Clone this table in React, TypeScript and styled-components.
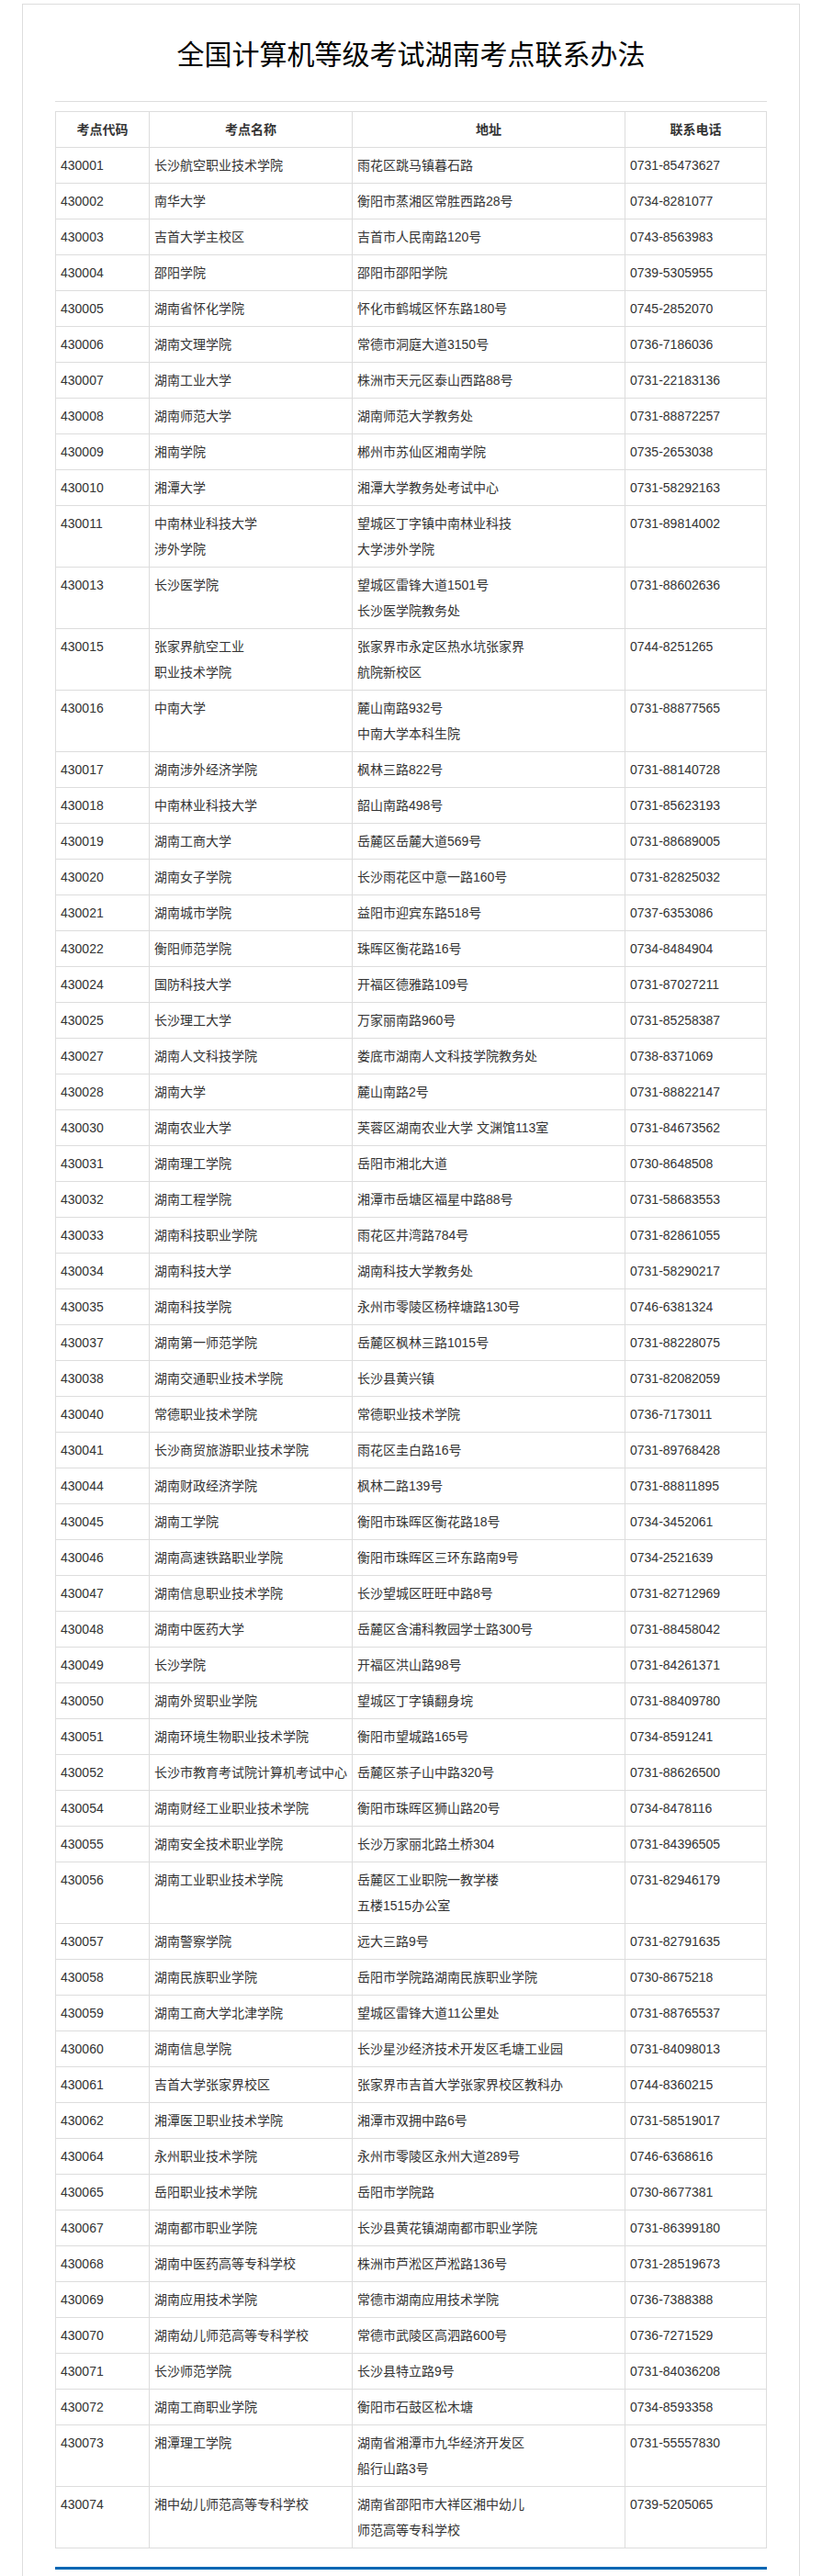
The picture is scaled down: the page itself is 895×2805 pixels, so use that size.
import React from 'react'
import styled, { createGlobalStyle } from 'styled-components'

const GlobalStyle = createGlobalStyle`
  body {
    margin: 0;
    background: #fff;
    font-family: "Liberation Sans", Arial, "Noto Sans CJK SC", sans-serif;
  }
`

const Page = styled.div`
  width: 775px;
  margin: 4px auto 0;
  border: 1px solid #ddd;
  border-bottom: none;
  padding: 0 35px 30px;
`

const Title = styled.h1`
  margin: 32px 0 0;
  font-size: 30px;
  line-height: 40px;
  font-weight: normal;
  text-align: center;
  color: #000;
  font-family: "Noto Sans CJK SC", sans-serif;
`

const Divider = styled.div`
  margin-top: 33px;
  height: 1px;
  background: #ddd;
`

const Table = styled.table`
  margin-top: 10px;
  width: 775px;
  border-collapse: collapse;
  table-layout: fixed;
  font-size: 14px;
  color: #333;
`

const Cell = styled.td<{ $w?: number }>`
  box-sizing: border-box;
  width: ${p => (p.$w ? `${p.$w}px` : 'auto')};
  border: 1px solid #ddd;
  padding: 5px;
  line-height: 28px;
  vertical-align: top;
  text-align: left;
  white-space: nowrap;
`

const HeadCell = styled(Cell).attrs({ as: 'th' })`
  font-weight: bold;
  text-align: center;
  vertical-align: middle;
`

const BlueBar = styled.div`
  margin-top: 20px;
  height: 3px;
  background: #0066b3;
`

type Row = [string, string, string, string]

const rows: Row[] = [
  ['430001', '长沙航空职业技术学院', '雨花区跳马镇暮石路', '0731-85473627'],
  ['430002', '南华大学', '衡阳市蒸湘区常胜西路28号', '0734-8281077'],
  ['430003', '吉首大学主校区', '吉首市人民南路120号', '0743-8563983'],
  ['430004', '邵阳学院', '邵阳市邵阳学院', '0739-5305955'],
  ['430005', '湖南省怀化学院', '怀化市鹤城区怀东路180号', '0745-2852070'],
  ['430006', '湖南文理学院', '常德市洞庭大道3150号', '0736-7186036'],
  ['430007', '湖南工业大学', '株洲市天元区泰山西路88号', '0731-22183136'],
  ['430008', '湖南师范大学', '湖南师范大学教务处', '0731-88872257'],
  ['430009', '湘南学院', '郴州市苏仙区湘南学院', '0735-2653038'],
  ['430010', '湘潭大学', '湘潭大学教务处考试中心', '0731-58292163'],
  ['430011', '中南林业科技大学|涉外学院', '望城区丁字镇中南林业科技|大学涉外学院', '0731-89814002'],
  ['430013', '长沙医学院', '望城区雷锋大道1501号|长沙医学院教务处', '0731-88602636'],
  ['430015', '张家界航空工业|职业技术学院', '张家界市永定区热水坑张家界|航院新校区', '0744-8251265'],
  ['430016', '中南大学', '麓山南路932号|中南大学本科生院', '0731-88877565'],
  ['430017', '湖南涉外经济学院', '枫林三路822号', '0731-88140728'],
  ['430018', '中南林业科技大学', '韶山南路498号', '0731-85623193'],
  ['430019', '湖南工商大学', '岳麓区岳麓大道569号', '0731-88689005'],
  ['430020', '湖南女子学院', '长沙雨花区中意一路160号', '0731-82825032'],
  ['430021', '湖南城市学院', '益阳市迎宾东路518号', '0737-6353086'],
  ['430022', '衡阳师范学院', '珠晖区衡花路16号', '0734-8484904'],
  ['430024', '国防科技大学', '开福区德雅路109号', '0731-87027211'],
  ['430025', '长沙理工大学', '万家丽南路960号', '0731-85258387'],
  ['430027', '湖南人文科技学院', '娄底市湖南人文科技学院教务处', '0738-8371069'],
  ['430028', '湖南大学', '麓山南路2号', '0731-88822147'],
  ['430030', '湖南农业大学', '芙蓉区湖南农业大学 文渊馆113室', '0731-84673562'],
  ['430031', '湖南理工学院', '岳阳市湘北大道', '0730-8648508'],
  ['430032', '湖南工程学院', '湘潭市岳塘区福星中路88号', '0731-58683553'],
  ['430033', '湖南科技职业学院', '雨花区井湾路784号', '0731-82861055'],
  ['430034', '湖南科技大学', '湖南科技大学教务处', '0731-58290217'],
  ['430035', '湖南科技学院', '永州市零陵区杨梓塘路130号', '0746-6381324'],
  ['430037', '湖南第一师范学院', '岳麓区枫林三路1015号', '0731-88228075'],
  ['430038', '湖南交通职业技术学院', '长沙县黄兴镇', '0731-82082059'],
  ['430040', '常德职业技术学院', '常德职业技术学院', '0736-7173011'],
  ['430041', '长沙商贸旅游职业技术学院', '雨花区圭白路16号', '0731-89768428'],
  ['430044', '湖南财政经济学院', '枫林二路139号', '0731-88811895'],
  ['430045', '湖南工学院', '衡阳市珠晖区衡花路18号', '0734-3452061'],
  ['430046', '湖南高速铁路职业学院', '衡阳市珠晖区三环东路南9号', '0734-2521639'],
  ['430047', '湖南信息职业技术学院', '长沙望城区旺旺中路8号', '0731-82712969'],
  ['430048', '湖南中医药大学', '岳麓区含浦科教园学士路300号', '0731-88458042'],
  ['430049', '长沙学院', '开福区洪山路98号', '0731-84261371'],
  ['430050', '湖南外贸职业学院', '望城区丁字镇翻身垸', '0731-88409780'],
  ['430051', '湖南环境生物职业技术学院', '衡阳市望城路165号', '0734-8591241'],
  ['430052', '长沙市教育考试院计算机考试中心', '岳麓区茶子山中路320号', '0731-88626500'],
  ['430054', '湖南财经工业职业技术学院', '衡阳市珠晖区狮山路20号', '0734-8478116'],
  ['430055', '湖南安全技术职业学院', '长沙万家丽北路土桥304', '0731-84396505'],
  ['430056', '湖南工业职业技术学院', '岳麓区工业职院一教学楼|五楼1515办公室', '0731-82946179'],
  ['430057', '湖南警察学院', '远大三路9号', '0731-82791635'],
  ['430058', '湖南民族职业学院', '岳阳市学院路湖南民族职业学院', '0730-8675218'],
  ['430059', '湖南工商大学北津学院', '望城区雷锋大道11公里处', '0731-88765537'],
  ['430060', '湖南信息学院', '长沙星沙经济技术开发区毛塘工业园', '0731-84098013'],
  ['430061', '吉首大学张家界校区', '张家界市吉首大学张家界校区教科办', '0744-8360215'],
  ['430062', '湘潭医卫职业技术学院', '湘潭市双拥中路6号', '0731-58519017'],
  ['430064', '永州职业技术学院', '永州市零陵区永州大道289号', '0746-6368616'],
  ['430065', '岳阳职业技术学院', '岳阳市学院路', '0730-8677381'],
  ['430067', '湖南都市职业学院', '长沙县黄花镇湖南都市职业学院', '0731-86399180'],
  ['430068', '湖南中医药高等专科学校', '株洲市芦淞区芦淞路136号', '0731-28519673'],
  ['430069', '湖南应用技术学院', '常德市湖南应用技术学院', '0736-7388388'],
  ['430070', '湖南幼儿师范高等专科学校', '常德市武陵区高泗路600号', '0736-7271529'],
  ['430071', '长沙师范学院', '长沙县特立路9号', '0731-84036208'],
  ['430072', '湖南工商职业学院', '衡阳市石鼓区松木塘', '0734-8593358'],
  ['430073', '湘潭理工学院', '湖南省湘潭市九华经济开发区|船行山路3号', '0731-55557830'],
  ['430074', '湘中幼儿师范高等专科学校', '湖南省邵阳市大祥区湘中幼儿|师范高等专科学校', '0739-5205065'],
]

// "|" marks a hard line break inside a cell
const Lines = ({ text }: { text: string }) => (
  <>
    {text.split('|').map((line, i) => (
      <React.Fragment key={i}>
        {i > 0 && <br />}
        {line}
      </React.Fragment>
    ))}
  </>
)

const App = () => {
  return (
    <Page>
      <GlobalStyle />
      <Title>全国计算机等级考试湖南考点联系办法</Title>
      <Divider />
      <Table>
        <thead>
          <tr>
            <HeadCell $w={102}>考点代码</HeadCell>
            <HeadCell $w={221}>考点名称</HeadCell>
            <HeadCell $w={297}>地址</HeadCell>
            <HeadCell>联系电话</HeadCell>
          </tr>
        </thead>
        <tbody>
          {rows.map(r => (
            <tr key={r[0]}>
              {r.map((c, i) => (
                <Cell key={i}>
                  <Lines text={c} />
                </Cell>
              ))}
            </tr>
          ))}
        </tbody>
      </Table>
      <BlueBar />
    </Page>
  )
}

export default App
